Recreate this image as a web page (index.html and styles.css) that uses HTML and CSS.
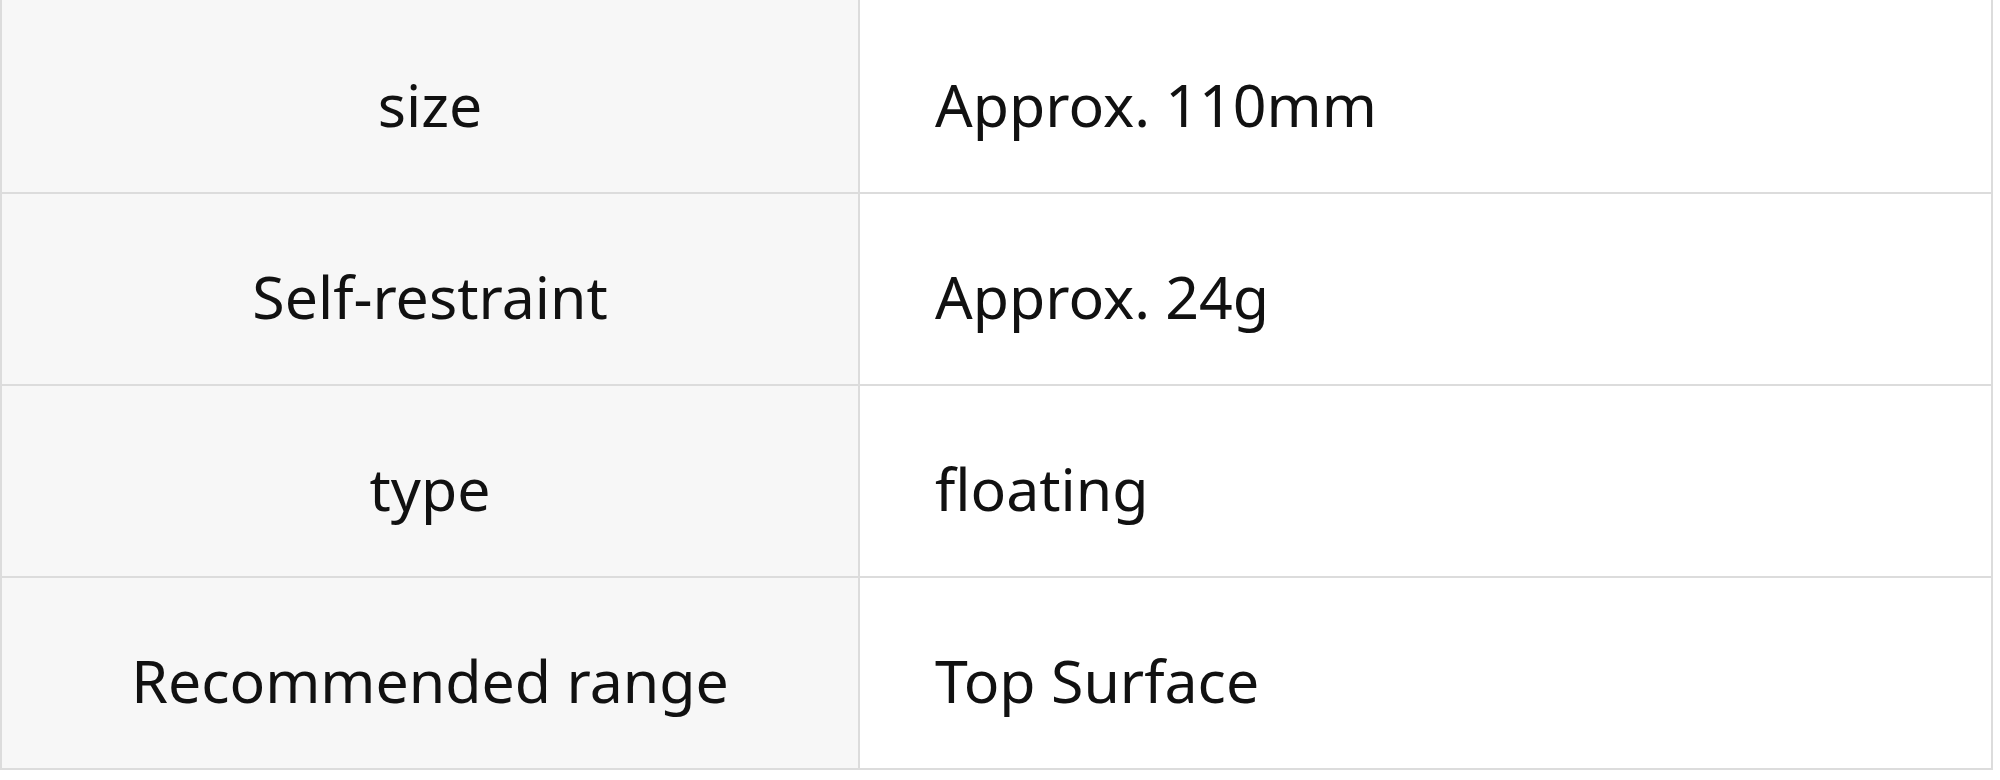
FILE: index.html
```html
<!DOCTYPE html>
<html lang="en">
<head>
<meta charset="utf-8">
<title>Specifications</title>
<link rel="stylesheet" href="styles.css">
</head>
<body>
<table class="spec">
  <tbody>
    <tr class="spec-row spec-row-first"><th class="spec-key">size</th><td class="spec-val">Approx. 110mm</td></tr>
    <tr class="spec-row"><th class="spec-key">Self-restraint</th><td class="spec-val">Approx. 24g</td></tr>
    <tr class="spec-row"><th class="spec-key">type</th><td class="spec-val">floating</td></tr>
    <tr class="spec-row"><th class="spec-key">Recommended range</th><td class="spec-val">Top Surface</td></tr>
  </tbody>
</table>
</body>
</html>
```
FILE: styles.css
```css
html, body {
  margin: 0;
  padding: 0;
  background: #ffffff;
}

.spec {
  width: 1993px;
  border-collapse: separate;
  border-spacing: 0;
  border-left: 2px solid #dcdcdc;
  border-right: 2px solid #dcdcdc;
  table-layout: fixed;
  font-family: "Noto Sans", "Open Sans", sans-serif;
  font-size: 59px;
  line-height: 80px;
  color: #111111;
}

.spec th,
.spec td {
  padding: 62px 0 48px;
  border-bottom: 2px solid #dcdcdc;
  font-weight: normal;
  white-space: nowrap;
}

.spec-row-first th,
.spec-row-first td {
  padding-top: 64px;
}

.spec-key {
  width: 856px;
  background: #f7f7f7;
  text-align: center;
  border-right: 2px solid #dcdcdc;
}

.spec .spec-val {
  background: #ffffff;
  text-align: left;
  padding-left: 75px;
}
```
